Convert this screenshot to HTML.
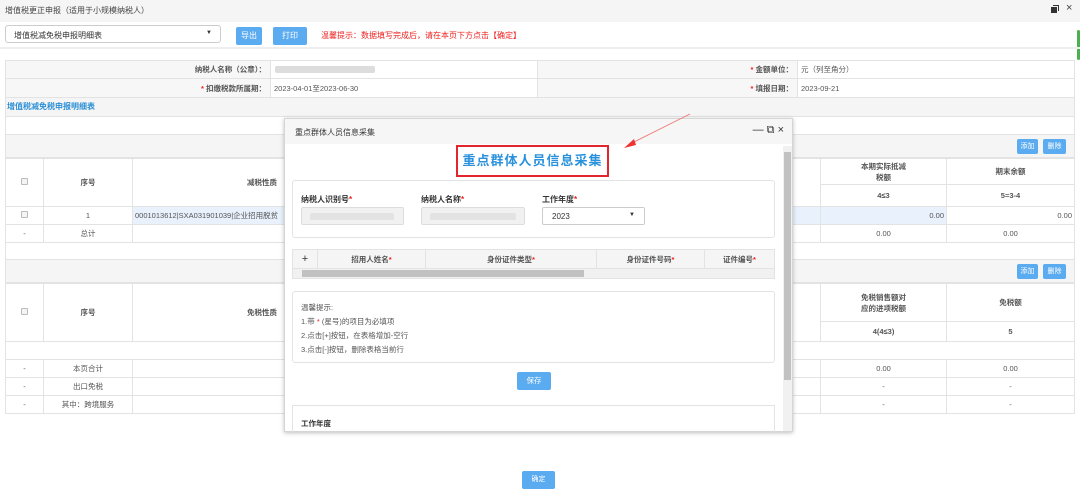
<!DOCTYPE html>
<html><head><meta charset="utf-8"><style>
*{box-sizing:border-box;margin:0;padding:0}
body{width:1080px;height:498px;overflow:hidden;background:#fff;font-family:"Liberation Sans","Noto Sans CJK SC",sans-serif;font-size:8px;color:#333;position:relative}
.a{position:absolute}
.btn{position:absolute;background:#5aabf0;color:#fff;text-align:center;border-radius:2px;font-size:8px}
.t{position:absolute;border-collapse:collapse;table-layout:fixed}
.t td{border:1px solid #e3e3e3;text-align:center;font-size:7.5px;color:#555;padding:0}
.b{font-weight:bold;color:#333}
.cb{display:inline-block;width:7px;height:7px;border:1px solid #bbb;border-radius:1px;background:#f4f4f4}
.r{color:#e22}
.blur{background:#e3e3e3;height:7px;border-radius:2px;position:absolute}
</style></head><body>
<div class="a" style="left:0;top:0;width:1080px;height:22px;background:#f5f5f5"></div>
<div class="a" style="left:5px;top:5px;font-size:8px;color:#444">增值税更正申报（适用于小规模纳税人）</div>
<div class="a" style="left:1051px;top:7px;width:6px;height:6px;background:#333"></div>
<div class="a" style="left:1053px;top:5px;width:6px;height:6px;border:1px solid #333;border-left:none;border-bottom:none"></div>
<div class="a" style="left:1066px;top:2px;font-size:11px;color:#444">×</div>
<div class="a" style="left:1077px;top:30px;width:3px;height:30px;background:#4caf50;border-radius:2px"></div>
<div class="a" style="left:5px;top:25px;width:216px;height:18px;border:1px solid #ccc;border-radius:3px;padding:4px 8px;font-size:8px">增值税减免税申报明细表<span style="float:right;font-size:6px">▼</span></div>
<div class="btn" style="left:236px;top:27px;width:26px;height:18px;line-height:18px">导出</div>
<div class="btn" style="left:273px;top:27px;width:34px;height:18px;line-height:18px">打印</div>
<div class="a r" style="left:321px;top:30px;font-size:8px">温馨提示：数据填写完成后，请在本页下方点击【确定】</div>
<div class="a" style="left:0;top:47px;width:1080px;height:2px;background:#eee"></div>

<table class="t" style="left:5px;top:60px;width:1070px">
<col style="width:265px"><col style="width:267px"><col style="width:260px"><col>
<tr style="height:18px;background:#f7f7f7"><td class="b" style="text-align:right;padding-right:4px">纳税人名称（公章）：</td><td style="text-align:left;background:#fff"><div style="position:relative;width:100px;height:7px;left:4px;background:#ddd;border-radius:2px"></div></td><td class="b" style="text-align:right;padding-right:4px"><span class="r">* </span>金额单位：</td><td style="text-align:left;padding-left:3px;background:#fff">元（列至角分）</td></tr>
<tr style="height:19px;background:#f7f7f7"><td class="b" style="text-align:right;padding-right:4px"><span class="r">* </span>扣缴税款所属期：</td><td style="text-align:left;padding-left:3px;background:#fff">2023-04-01至2023-06-30</td><td class="b" style="text-align:right;padding-right:4px"><span class="r">* </span>填报日期：</td><td style="text-align:left;padding-left:3px;background:#fff">2023-09-21</td></tr>
</table>
<div class="a" style="left:5px;top:97px;width:1070px;height:20px;background:#f5f5f5;border:1px solid #e3e3e3"></div>
<div class="a" style="left:7px;top:101px;color:#2a8fd6;font-weight:bold">增值税减免税申报明细表</div>
<div class="a" style="left:5px;top:116px;width:1070px;height:19px;border:1px solid #e3e3e3"></div>
<div class="a" style="left:5px;top:134px;width:1070px;height:24px;background:#f5f5f5;border:1px solid #e3e3e3"></div>
<div class="btn" style="left:1017px;top:139px;width:21px;height:15px;line-height:15px;font-size:7px">添加</div>
<div class="btn" style="left:1043px;top:139px;width:23px;height:15px;line-height:15px;font-size:7px">删除</div>
<table class="t" style="left:5px;top:158px;width:1070px">
<col style="width:38px"><col style="width:89px"><col style="width:688px"><col style="width:126px"><col>
<tr style="height:26px"><td rowspan="2"><span class="cb"></span></td><td rowspan="2" class="b">序号</td><td rowspan="2" class="b" style="text-align:left;padding-left:114px">减税性质</td><td class="b">本期实际抵减<br>税额</td><td class="b">期末余额</td></tr>
<tr style="height:22px"><td class="b">4≤3</td><td class="b">5=3-4</td></tr>
<tr style="height:18px"><td><span class="cb"></span></td><td>1</td><td style="text-align:left;background:#e8f1fc;padding-left:2px">0001013612|SXA031901039|企业招用脱贫</td><td style="background:#e8f1fc;text-align:right;padding-right:2px">0.00</td><td style="text-align:right;padding-right:2px">0.00</td></tr>
<tr style="height:18px"><td>-</td><td>总计</td><td></td><td>0.00</td><td>0.00</td></tr>
<tr style="height:18px"><td colspan="5"></td></tr>
</table>
<div class="a" style="left:5px;top:259px;width:1070px;height:24px;background:#f5f5f5;border:1px solid #e3e3e3"></div>
<div class="btn" style="left:1017px;top:264px;width:21px;height:15px;line-height:15px;font-size:7px">添加</div>
<div class="btn" style="left:1043px;top:264px;width:23px;height:15px;line-height:15px;font-size:7px">删除</div>
<table class="t" style="left:5px;top:283px;width:1070px">
<col style="width:38px"><col style="width:89px"><col style="width:688px"><col style="width:126px"><col>
<tr style="height:38px"><td rowspan="2"><span class="cb"></span></td><td rowspan="2" class="b">序号</td><td rowspan="2" class="b" style="text-align:left;padding-left:114px">免税性质</td><td class="b">免税销售额对<br>应的进项税额</td><td class="b">免税额</td></tr>
<tr style="height:20px"><td class="b">4(4≤3)</td><td class="b">5</td></tr>
<tr style="height:18px"><td colspan="5"></td></tr>
<tr style="height:18px"><td>-</td><td>本页合计</td><td></td><td>0.00</td><td>0.00</td></tr>
<tr style="height:18px"><td>-</td><td>出口免税</td><td></td><td>-</td><td>-</td></tr>
<tr style="height:18px"><td>-</td><td>其中：跨境服务</td><td></td><td>-</td><td>-</td></tr>
</table>
<div class="btn" style="left:522px;top:471px;width:33px;height:18px;line-height:18px;font-size:7px">确定</div>

<!-- dialog -->
<div class="a" style="left:284px;top:118px;width:509px;height:314px;background:#fff;border:1px solid #d5d5d5;box-shadow:0 1px 4px rgba(0,0,0,.25)">
<div style="height:25px;background:#f6f6f6;padding:8px 10px;font-size:8px">重点群体人员信息采集<span style="position:absolute;right:8px;top:5px;font-size:11px;color:#333">— ⧉ ×</span></div>
</div>
<div class="a" style="left:456px;top:145px;width:153px;height:32px;border:2px solid #e3262e;color:#2a92dc;font-size:13px;font-weight:bold;text-align:center;line-height:28px;letter-spacing:1px">重点群体人员信息采集</div>
<div class="a" style="left:783px;top:146px;width:9px;height:285px;background:#f1f1f1"></div>
<div class="a" style="left:784px;top:152px;width:7px;height:228px;background:#c1c1c1"></div>
<div class="a" style="left:292px;top:180px;width:483px;height:58px;border:1px solid #e3e3e3;border-radius:3px"></div>
<div class="a b" style="left:301px;top:194px">纳税人识别号<span class="r">*</span></div>
<div class="a b" style="left:421px;top:194px">纳税人名称<span class="r">*</span></div>
<div class="a b" style="left:542px;top:194px">工作年度<span class="r">*</span></div>
<div class="a" style="left:301px;top:207px;width:103px;height:18px;border:1px solid #ddd;border-radius:2px;background:#f1f1f1"><div class="blur" style="left:8px;top:5px;width:84px"></div></div>
<div class="a" style="left:421px;top:207px;width:104px;height:18px;border:1px solid #ddd;border-radius:2px;background:#f1f1f1"><div class="blur" style="left:8px;top:5px;width:86px"></div></div>
<div class="a" style="left:542px;top:207px;width:103px;height:18px;border:1px solid #ccc;border-radius:2px;padding:4px 9px">2023<span style="float:right;font-size:6px">▼</span></div>
<table class="t" style="left:292px;top:249px;width:483px">
<col style="width:25px"><col style="width:108px"><col style="width:171px"><col style="width:108px"><col>
<tr style="height:19px;background:#f5f5f5"><td style="font-size:11px;color:#333">+</td><td class="b">招用人姓名<span class="r">*</span></td><td class="b">身份证件类型<span class="r">*</span></td><td class="b">身份证件号码<span class="r">*</span></td><td class="b">证件编号<span class="r">*</span></td></tr>
</table>
<div class="a" style="left:292px;top:268px;width:483px;height:11px;background:#f1f1f1;border:1px solid #e3e3e3"></div>
<div class="a" style="left:302px;top:270px;width:282px;height:7px;background:#c1c1c1"></div>
<div class="a" style="left:292px;top:291px;width:483px;height:72px;border:1px solid #e3e3e3;border-radius:3px;padding:9px 8px;line-height:14px;font-size:7.5px;color:#555">温馨提示:<br>1.带 <span class="r">*</span> (星号)的项目为必填项<br>2.点击[+]按钮，在表格增加-空行<br>3.点击[-]按钮，删除表格当前行</div>
<div class="btn" style="left:517px;top:372px;width:34px;height:18px;line-height:18px;font-size:7.5px">保存</div>
<div class="a" style="left:292px;top:405px;width:483px;height:27px;border:1px solid #e3e3e3;border-bottom:none;padding:12px 8px;font-weight:bold;font-size:7.5px">工作年度</div>
<svg class="a" style="left:0;top:0" width="1080" height="498"><line x1="690" y1="114" x2="632" y2="143" stroke="#f07070" stroke-width="0.8"/><polygon points="624,148 634,139 636,145" fill="#e33"/></svg>
</body></html>
